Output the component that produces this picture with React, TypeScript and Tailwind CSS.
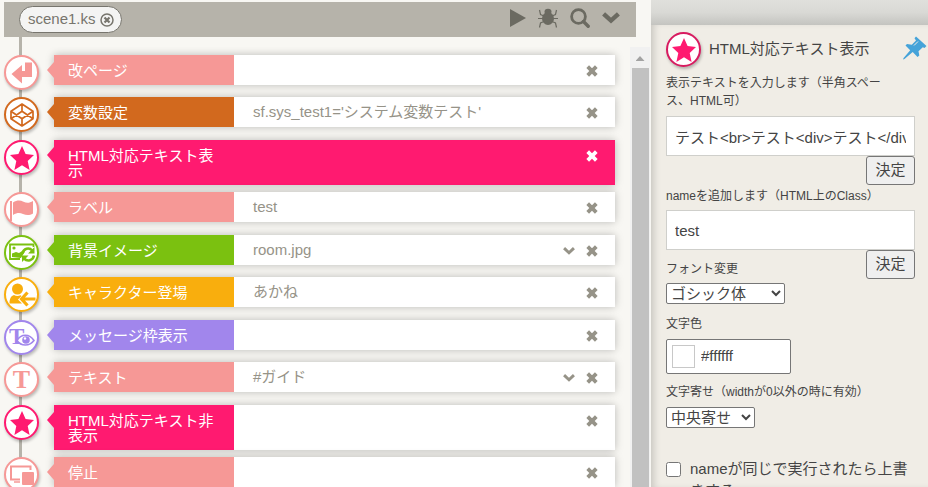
import type { ReactNode } from "react";

const PINK = "#f69896";

function StarIcon() {
  return (
    <svg viewBox="0 0 24 24" className="size-6 text-[#ff1a70]" fill="currentColor">
      <path d="M12 0l3.600 8.100 8.400.8-6.300 6L19.600 24 12 19.300 4.400 24l1.900-9.100L0 8.900l8.400-.8z" />
    </svg>
  );
}

function BoxIcon() {
  return (
    <svg viewBox="0 0 24 24" className="size-6" fill="none" stroke="currentColor" strokeWidth="1.700" strokeLinejoin="round">
      <path d="M12 1 23 8.200v7.600L12 23 1 15.800V8.200zM12 1v7.200M12 15.800V23M1 8.200l11 7.600 11-7.600M1 15.800l11-7.600 11 7.600" />
    </svg>
  );
}

function ReturnIcon() {
  return (
    <svg viewBox="0 0 24 24" className="size-6" fill="currentColor">
      <path d="M1.500 13 12 4v6h3V1.500h7V16H12v6.500z" />
    </svg>
  );
}

function FlagIcon() {
  return (
    <svg viewBox="0 0 26 24" className="h-6 w-[26px]" fill="currentColor">
      <path d="M1 3h2v20H1z" />
      <path d="M4 4.500c4-2.500 7-2.500 10.500-.8s6 1.300 9.500-.7v12.500c-3.500 2-6.500 2-10 .4s-6-1.300-10 1z" />
    </svg>
  );
}

function ImageRefreshIcon() {
  return (
    <svg viewBox="0 0 28 22" className="h-[22px] w-7" fill="none" stroke="currentColor">
      <path d="M25.500 5V2.500H2V17h10" strokeWidth="1.800" />
      <path d="M4 15v-3.500l4-1.500 3 1 4-2.500 2 1-4 6.500z" fill="currentColor" stroke="none" />
      <circle cx="6" cy="6" r="1.600" fill="currentColor" stroke="none" />
      <path d="M14.500 11.500c1-5 6.500-6.500 9.800-3M26 13.500c-1 5-6.500 6.500-10 3" strokeWidth="2.500" />
      <path d="M26.500 5v6.500H20zM14 20v-6.500h6.500z" fill="currentColor" stroke="none" />
    </svg>
  );
}

function UserEnterIcon() {
  return (
    <svg viewBox="0 0 28 24" className="h-6 w-7" fill="currentColor">
      <circle cx="9.500" cy="6" r="5.500" />
      <path d="M1.500 20.500c0-5 1.500-7.500 4.500-8.500 2 1.200 4.500 1.200 6.500.2l1 .8-3.500 3.500 4 4z" />
      <path d="M19.500 9.500 13.500 16l6 6.500M14.500 16h13" fill="none" stroke="currentColor" strokeWidth="3.200" />
    </svg>
  );
}

function TextEyeIcon() {
  return (
    <svg viewBox="0 0 28 30" className="h-[30px] w-7" fill="none" stroke="currentColor">
      <text x="1" y="21" fontSize="23" fontWeight="bold" fontFamily="Liberation Serif, serif" fill="currentColor" stroke="none">
        T
      </text>
      <path d="M9 17.500c4-7 12.500-7 17 0-4.500 6-13 6-17 0z" fill="white" strokeWidth="1.600" />
      <circle cx="18" cy="17" r="3.800" fill="currentColor" stroke="none" />
      <circle cx="17" cy="15.500" r="1.200" fill="white" stroke="none" />
    </svg>
  );
}

function TextIcon() {
  return <span className="font-['Liberation_Serif',serif] text-[26px] leading-[30px] font-bold">T</span>;
}

function ScreensIcon() {
  return (
    <svg viewBox="0 0 26 22" className="h-[22px] w-[26px]" fill="none" stroke="currentColor">
      <path d="M11 15.500H2V2.500h19.500V6" strokeWidth="2" />
      <rect x="13" y="8" width="12" height="13" rx="1" fill="currentColor" stroke="none" />
      <path d="M5 18h6" strokeWidth="1.500" />
    </svg>
  );
}

function CrossIcon() {
  return (
    <svg viewBox="0 0 12 12" className="size-3" stroke="currentColor" strokeWidth="3.800">
      <path d="M1.700 1.700l8.600 8.600M10.300 1.700l-8.600 8.600" />
    </svg>
  );
}

function ChevronIcon({ className }: { className: string }) {
  return (
    <svg viewBox="0 0 18 12" className={className} fill="none" stroke="currentColor" strokeWidth="4.400">
      <path d="M1.600 1.800 9 8.600l7.400-6.800" />
    </svg>
  );
}

function BugIcon() {
  return (
    <svg viewBox="0 0 20 20" className="size-5" fill="none" stroke="currentColor">
      <ellipse cx="10" cy="10.500" rx="6" ry="6.500" fill="currentColor" stroke="none" />
      <ellipse cx="10" cy="3.800" rx="3.500" ry="3" fill="currentColor" stroke="none" />
      <path
        d="M6 8 2.500 6.500 1.500 2M14 8l3.500-1.500 1-4.500M5 10.500H0M15 10.500h5M6 13.500l-3.500 1.500-1 4.500M14 13.500l3.500 1.500 1 4.500"
        strokeWidth="1.200"
      />
    </svg>
  );
}

function PinIcon() {
  return (
    <svg viewBox="0 0 24 24" className="size-6" fill="currentColor">
      <path d="M13 0.500 23.500 10l-2 2-1.700-.8-4.300 4 .8 4.300-1.800 1.500-4.800-5L1.500 23 0 23.500.6 22l6.600-7.800L2.500 9.500 4 8l4.800.7L13 4.500l-1.500-2.300z" />
      <path d="M11 9.500l4-4" stroke="#f0ede6" strokeWidth="1" />
    </svg>
  );
}

function Badge({ color, children }: { color: string; children: ReactNode }) {
  return (
    <span
      className="flex size-[35px] shrink-0 items-center justify-center rounded-full border-2 border-current bg-white shadow-[1px_2px_3px_rgba(0,0,0,0.25)]"
      style={{ color }}
    >
      {children}
    </span>
  );
}

type Row = {
  label: string;
  color: string;
  icon: ReactNode;
  value?: string;
  tall?: boolean;
  selected?: boolean;
  expandable?: boolean;
};

const rows: Row[] = [
  { label: "改ページ", color: PINK, icon: <ReturnIcon /> },
  { label: "変数設定", color: "#d2691e", icon: <BoxIcon />, value: "sf.sys_test1='システム変数テスト'" },
  { label: "HTML対応テキスト表示", color: "#ff1a70", icon: <StarIcon />, tall: true, selected: true },
  { label: "ラベル", color: PINK, icon: <FlagIcon />, value: "test" },
  { label: "背景イメージ", color: "#7bc110", icon: <ImageRefreshIcon />, value: "room.jpg", expandable: true },
  { label: "キャラクター登場", color: "#f9ae0d", icon: <UserEnterIcon />, value: "あかね" },
  { label: "メッセージ枠表示", color: "#a186ec", icon: <TextEyeIcon /> },
  { label: "テキスト", color: PINK, icon: <TextIcon />, value: "#ガイド", expandable: true },
  { label: "HTML対応テキスト非表示", color: "#ff1a70", icon: <StarIcon />, tall: true },
  { label: "停止", color: PINK, icon: <ScreensIcon /> },
];

function TimelineRow({ row }: { row: Row }) {
  return (
    <li className={row.tall ? "flex items-start pb-[7px]" : "flex items-start odd:pb-[7px] even:pb-2"}>
      <Badge color={row.color}>{row.icon}</Badge>
      <span
        className="mt-[7px] ml-2 h-4 w-[7px] shrink-0 [clip-path:polygon(100%_0,100%_100%,0_50%)]"
        style={{ background: row.color }}
      />
      <div
        className={
          row.tall
            ? "flex h-[45px] flex-1 shadow-[0_0_8px_rgba(0,0,0,0.25)]"
            : "flex h-[30px] flex-1 shadow-[0_0_8px_rgba(0,0,0,0.25)]"
        }
        style={{ background: row.selected ? row.color : "white" }}
      >
        <div className="w-[180px] shrink-0 pt-2 pr-[14px] pl-[14px] leading-[15px] break-all text-white" style={{ background: row.color }}>
          {row.label}
        </div>
        <div className="flex-1 truncate pl-[19px] leading-[30px] text-[#969388]">{row.value}</div>
        <div className={row.selected ? "flex h-8 items-center pr-[17px] text-white" : "flex h-8 items-center pr-[17px] text-[#969388]"}>
          {row.expandable && (
            <button aria-label="開く" className="mr-[11px]">
              <ChevronIcon className="h-2 w-3" />
            </button>
          )}
          <button aria-label="削除">
            <CrossIcon />
          </button>
        </div>
      </div>
    </li>
  );
}

const caption = "block text-xs leading-[18px]";
const textBox = "block h-10 w-full border border-[#cfcfcb] bg-white px-2 outline-none";
const decide = "h-[29px] w-[49px] shrink-0 rounded-[3px] border border-[#767676] bg-[#efefef]";
const dropDown = "block h-[21px] rounded-[2px] border border-[#767676] bg-white leading-[18px]";

export default function App() {
  return (
    <div className="flex h-screen overflow-hidden bg-[#f8f7f3] font-['Liberation_Sans','Noto_Sans_CJK_JP',sans-serif] text-[15px] text-[#444]">
      <main className="relative flex min-w-0 flex-1 flex-col">
        <header className="mt-[2px] mr-[15px] ml-1 flex h-[35px] shrink-0 items-center bg-[#b6b3aa] pr-4 pl-[15px] text-[#6b6a61]">
          <div className="flex h-[27px] items-center gap-1 rounded-full border border-[#77756d] bg-[#f4f4f3] pr-[7px] pl-2 text-[#77756d]">
            <span>scene1.ks</span>
            <button aria-label="閉じる">
              <svg viewBox="0 0 14 14" className="size-[14px]" fill="none" stroke="currentColor">
                <circle cx="7" cy="7" r="6" strokeWidth="1.500" />
                <path d="M4.500 4.500l5 5M9.500 4.500l-5 5" strokeWidth="2.200" />
              </svg>
            </button>
          </div>
          <div className="mb-[3px] ml-auto flex items-center gap-3">
            <button aria-label="再生">
              <svg viewBox="0 0 16 18" className="h-[18px] w-4" fill="currentColor">
                <path d="M0 0l16 9-16 9z" />
              </svg>
            </button>
            <button aria-label="デバッグ">
              <BugIcon />
            </button>
            <button aria-label="検索">
              <svg viewBox="0 0 20 20" className="size-5" fill="none" stroke="currentColor">
                <circle cx="8.500" cy="8.500" r="6.900" strokeWidth="2.800" />
                <path d="M13.500 13.500l4.700 4.700" strokeWidth="3.400" strokeLinecap="round" />
              </svg>
            </button>
            <button aria-label="メニュー">
              <ChevronIcon className="h-3 w-[18px]" />
            </button>
          </div>
        </header>
        <div className="absolute top-[37px] bottom-0 left-[19px] w-[3px] bg-[#b6b3aa]" />
        <div className="relative mt-[10px] flex min-h-0 flex-1">
          <ul className="min-w-0 flex-1 overflow-hidden pt-2 pr-[15px] pl-1">
            {rows.map((row) => (
              <TimelineRow key={row.label} row={row} />
            ))}
          </ul>
          <div className="mr-px flex w-5 shrink-0 flex-col items-center bg-[#f1f1f1]">
            <span className="mt-[9px] mb-[7px] h-[5px] w-[9px] bg-[#a3a3a3] [clip-path:polygon(50%_0,100%_100%,0_100%)]" />
            <span className="w-[17px] flex-1 bg-[#c1c1c1]" />
          </div>
        </div>
      </main>

      <aside className="flex w-[277px] shrink-0 flex-col bg-[#d9d9d5]">
        <div className="h-[25px] shrink-0 bg-linear-to-b from-[#e0e0dc] via-[#d9d9d5] to-[#c4c4c0]" />
        <div className="min-h-0 flex-1 overflow-hidden bg-[#f0ede6] pt-[7px] pr-[13px] pl-[15px] shadow-[inset_6px_0_7px_-3px_rgba(0,0,0,0.16)]">
          <div className="-mr-3 flex items-center gap-2">
            <Badge color="#d81b60">
              <StarIcon />
            </Badge>
            <h2 className="flex-1">HTML対応テキスト表示</h2>
            <button aria-label="固定" className="mb-1 text-[#45a3d9]">
              <PinIcon />
            </button>
          </div>

          <label htmlFor="body" className={`${caption} mt-[7px] mb-[6px]`}>
            表示テキストを入力します（半角スペー
            <br />
            ス、HTML可）
          </label>
          <input id="body" className={textBox} defaultValue="テスト<br>テスト<div>テスト</div>" />
          <div className="flex justify-end">
            <button className={decide}>決定</button>
          </div>

          <label htmlFor="name" className={`${caption} mt-[2px] mb-[5px]`}>
            nameを追加します（HTML上のClass）
          </label>
          <input id="name" className={textBox} defaultValue="test" />
          <div className="flex items-start justify-between">
            <div className="pt-[10px]">
              <label htmlFor="font" className={`${caption} mb-[5px]`}>
                フォント変更
              </label>
              <select id="font" className={`${dropDown} w-[119px]`}>
                <option>ゴシック体</option>
              </select>
            </div>
            <button className={decide}>決定</button>
          </div>

          <label htmlFor="color" className={`${caption} mt-[11px] mb-[6px]`}>
            文字色
          </label>
          <div className="flex h-[35px] w-[125px] items-center gap-[6px] rounded-[2px] border border-[#767676] bg-white pl-[5px]">
            <span className="size-[23px] shrink-0 border border-[#c8c8c8] bg-white" />
            <input id="color" className="w-20 outline-none" defaultValue="#ffffff" />
          </div>

          <label htmlFor="align" className={`${caption} mt-[9px] mb-[6px]`}>
            文字寄せ（widthが0以外の時に有効）
          </label>
          <select id="align" className={`${dropDown} w-[89px]`}>
            <option>中央寄せ</option>
          </select>

          <label className="mt-[30px] flex items-start gap-[9px] leading-[22px]">
            <input type="checkbox" className="mt-1 size-[15px] shrink-0" />
            <span>nameが同じで実行されたら上書きする</span>
          </label>
        </div>
      </aside>
    </div>
  );
}
